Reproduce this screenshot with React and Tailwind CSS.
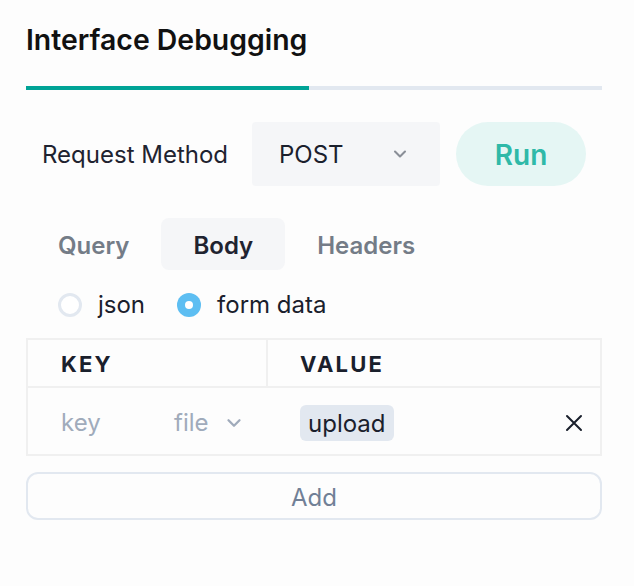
import React from "react";

function Chevron({ className }) {
  return (
    <svg viewBox="0 0 24 24" className={className} fill="none" stroke="currentColor" strokeWidth="2.5" strokeLinecap="round" strokeLinejoin="round">
      <path d="M6 9l6 6 6-6" />
    </svg>
  );
}

export default function App() {
  return (
    <div className="w-[634px] h-[586px] bg-[#fdfdfd] pl-[26px] pr-[32px] pt-[22px] text-[#1a202c]" style={{ fontFamily: "Inter, 'Noto Sans', sans-serif" }}>
      <h1 className="text-[28.4px] leading-[36px] font-semibold text-[#111]">Interface Debugging</h1>
      <div className="mt-[28px] flex h-[4px]">
        <div className="w-[283px] bg-[#00a396]" />
        <div className="flex-1 bg-[#e2e8f0]" />
      </div>

      <div className="mt-[32px] flex items-center pl-[16px]">
        <span className="pt-[2px] text-[24px] leading-[30px] text-[#1f2330] w-[194px]">Request Method</span>
        <div className="ml-[16px] w-[188px] h-[64px] rounded-[4px] bg-[#f5f6f8] flex items-center pl-[27px] pr-[30px] justify-between">
          <span className="pt-[2px] text-[24px] leading-[30px] text-[#1a202c]">POST</span>
          <Chevron className="w-[20px] h-[20px] text-[#8a8f98]" />
        </div>
        <button className="ml-[16px] w-[130px] h-[64px] pt-[2px] rounded-full bg-[#e5f6f4] text-[#2fb9a8] text-[28px] font-semibold">Run</button>
      </div>

      <div className="mt-[32px] flex">
        <div className="px-[32px] pt-[3px] h-[52px] flex items-center text-[24px] font-semibold text-[#747c87]">Query</div>
        <div className="px-[32px] pt-[3px] h-[52px] flex items-center text-[24px] font-semibold text-[#1f2330] bg-[#f5f6f8] rounded-[8px]">Body</div>
        <div className="px-[32px] pt-[3px] h-[52px] flex items-center text-[24px] font-semibold text-[#747c87]">Headers</div>
      </div>

      <div className="mt-[23px] flex items-center pl-[32px] h-[24px]">
        <span className="w-[24px] h-[24px] rounded-full border-[3px] border-[#e2e8f0] bg-white" />
        <span className="ml-[16px] text-[24px] text-[#1a202c]">json</span>
        <span className="ml-[32px] w-[24px] h-[24px] rounded-full bg-[#5dbef2] flex items-center justify-center">
          <span className="w-[8px] h-[8px] rounded-full bg-white" />
        </span>
        <span className="ml-[16px] text-[24px] text-[#1a202c]">form data</span>
      </div>

      <div className="mt-[21px] border-2 border-[#f0f0f0]">
        <div className="flex h-[48px] border-b-2 border-[#f0f0f0]">
          <div className="w-[240px] pt-[3px] border-r-2 border-[#f0f0f0] pl-[33px] flex items-center text-[22px] font-bold tracking-[0.1em] text-[#1a202c]">KEY</div>
          <div className="flex-1 pt-[3px] pl-[32px] flex items-center text-[22px] font-bold tracking-[0.1em] text-[#1a202c]">VALUE</div>
        </div>
        <div className="flex h-[66px] items-center">
          <div className="w-[240px] pl-[33px] pt-[3px] flex items-center">
            <span className="text-[24px] text-[#a0abbb] w-[113px]">key</span>
            <span className="text-[24px] text-[#a0abbb]">file</span>
            <Chevron className="ml-[14px] w-[22px] h-[22px] text-[#a0abbb]" />
          </div>
          <div className="flex-1 pl-[32px] flex items-center justify-between pr-[14px]">
            <span className="h-[36px] px-[8px] pt-[2px] mt-[3px] rounded-[6px] bg-[#e2e8f0] flex items-center text-[24px] text-[#1a202c]">upload</span>
            <svg viewBox="0 0 24 24" className="w-[24px] h-[24px] mt-[3px] text-[#1a202c]" fill="none" stroke="currentColor" strokeWidth="2" strokeLinecap="round">
              <path d="M5 5l14 14M19 5L5 19" />
            </svg>
          </div>
        </div>
      </div>

      <button className="mt-[16px] w-full h-[48px] pt-[3px] rounded-[12px] border-2 border-[#e2e8f0] text-[24px] text-[#718096] flex items-center justify-center">Add</button>
    </div>
  );
}
